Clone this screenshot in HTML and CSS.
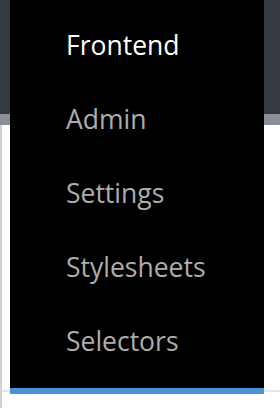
FILE: index.html
```html
<!DOCTYPE html>
<html lang="en">
<head>
    <meta charset="UTF-8">
    <title>Menu</title>
    <link rel="stylesheet" href="styles.css">
</head>
<body>
    <div class="topbar"></div>
    <div class="subbar"></div>
    <div class="page">
        <div class="rule"></div>
    </div>

    <ul class="menu">
        <li class="active">Frontend</li>
        <li>Admin</li>
        <li>Settings</li>
        <li>Stylesheets</li>
        <li>Selectors</li>
    </ul>
</body>
</html>
```

FILE: styles.css
```css
*{
    padding: 0;
    margin: 0;
    box-sizing: border-box;
}
body{
    background: #fff;
    font-family: "Open Sans", "Noto Sans", sans-serif;
    position: relative;
    height: 408px;
    overflow: hidden;
}
.topbar{
    height: 114px;
    background: #343a40;
}
.subbar{
    height: 11px;
    background: #8a9096;
}
.page{
    height: 283px;
    border-left: 2px solid #d0d3d6;
    padding-top: 265px;
}
.rule{
    height: 2px;
    background: #e2e4e6;
}

/* dropdown over the page */
.menu{
    list-style: none;
    position: absolute;
    top: 0;
    left: 10px;
    width: 254px;
    height: 394px;
    background: #000;
    border-bottom: 6px solid #4a90d9;
    padding: 8px 0 0 56px;
}
.menu li{
    height: 74px;
    line-height: 74px;
    font-size: 26.5px;
    color: #adadad;
}
.menu .active{
    color: #fff;
}
```
